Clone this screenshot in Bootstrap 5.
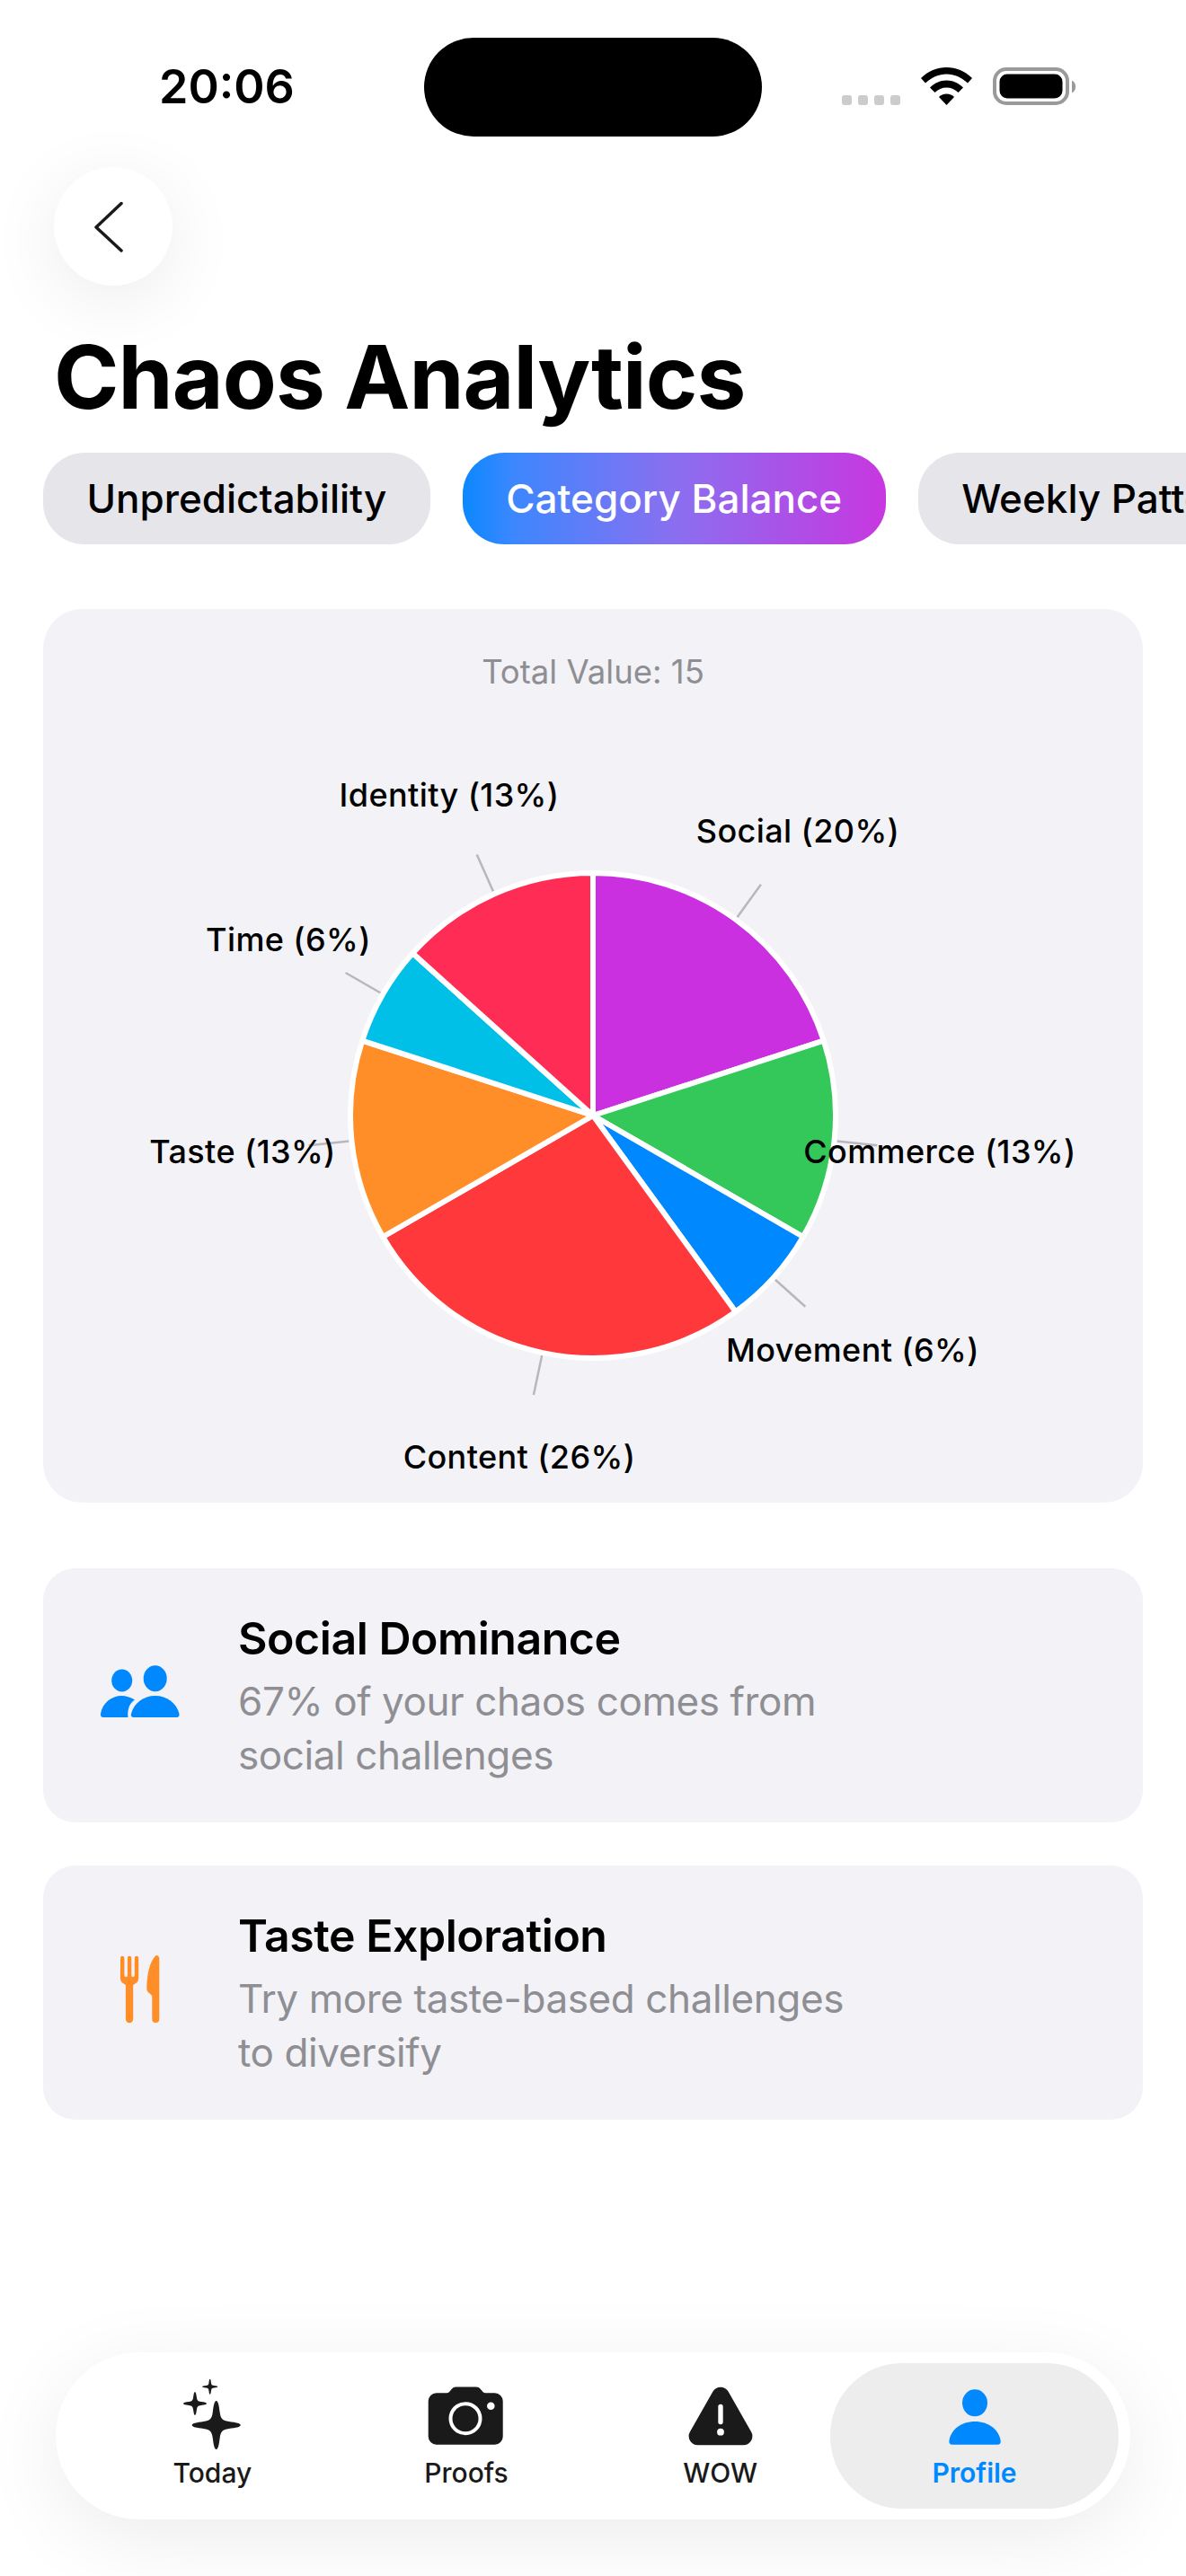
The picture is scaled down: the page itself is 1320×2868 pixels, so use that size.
<!DOCTYPE html>
<html lang="en">
<head>
  <meta charset="UTF-8" />
  <title>Chaos Analytics</title>
  <link rel="stylesheet" href="https://cdn.jsdelivr.net/npm/bootstrap@5.3.0/dist/css/bootstrap.min.css">
  <style>
    body { font-family: Inter, "Liberation Sans", sans-serif; color: #000; background: #fff; }
    .screen { width: 1320px; height: 2868px; overflow: hidden; }

    .status-row { padding: 42px 0 0 177px; height: 152px; }
    .status-time { width: 295px; margin-top: 25px; font-size: 52px; line-height: 60px; font-weight: 600; }
    .island { width: 376px; height: 110px; border-radius: 55px; background: #000; }
    .status-icons { margin: 33px 0 0 89px; height: 42px; }
    .sig-dot { width: 11px; height: 11px; border-radius: 3px; background: #ccc; }
    .sig-dots { gap: 7px; }
    .wifi-icon, .batt-icon { margin-left: 23px; }

    .back-btn { width: 132px; height: 132px; margin: 34px 0 0 60px; background: #fff; box-shadow: 0 16px 80px rgba(0, 0, 0, .08); }

    .page-title { margin: 47px 0 0 60px; font-size: 98px; line-height: 110px; font-weight: 700; letter-spacing: -.9px; }

    .seg-row { margin-top: 29px; padding-left: 48px; gap: 36px; overflow: hidden; }
    .seg-pill { flex: 0 0 auto; height: 102px; padding: 0 48.500px; border-radius: 46px; background: #e5e5ea; font-size: 44px; line-height: 102px; font-weight: 500; white-space: nowrap; }
    .seg-pill.is-on { background: linear-gradient(90deg, #0a88ff 0%, #3d87fe 12%, #8a6ff0 50%, #c837e0 100%); color: #fff; }

    .panel { margin: 0 48px; background: #f2f2f7; border: 0; }
    .chart-panel { margin-top: 72px; height: 995px; border-radius: 44px; }
    .chart-total { padding-top: 50px; font-size: 36.500px; line-height: 40px; color: #8e8e93; text-align: center; }
    .chart-svg { display: block; width: 1224px; height: 905px; }
    .chart-svg text { font-size: 36px; font-weight: 550; letter-spacing: .4px; text-anchor: middle; fill: #000; }

    .insight { height: 283px; border-radius: 36px; }
    .insight-first { margin-top: 73px; }
    .insight-next { margin-top: 48px; }
    .insight-icon { width: 110px; margin: 0 55px 0 52px; }
    .insight-copy { padding-top: 3px; }
    .insight-title { font-size: 50px; line-height: 60px; font-weight: 600; letter-spacing: -.45px; }
    .insight-text { margin-top: 10px; font-size: 44px; line-height: 60px; letter-spacing: -.4px; color: #8e8e93; }

    .tabbar { margin: auto 62px 63px; height: 186px; padding: 12px 32px 12px 33px; border-radius: 93px; background: #fff; box-shadow: 0 20px 90px rgba(0, 0, 0, .08); }
    .tab-cell { flex: 1 1 0; min-width: 0; height: 162px; padding-top: 9px; color: #1a1a1a; font-size: 30px; line-height: 36px; font-weight: 500; }
    .tab-cell.is-on { flex: 0 0 321px; margin: 0 -19px; border-radius: 80px; background: #ededed; color: #0088ff; font-weight: 600; }
    .tab-cell svg { display: block; height: 95px; }
  </style>
</head>
<body>
  <div class="screen d-flex flex-column">

    <div class="status-row d-flex align-items-start">
      <div class="status-time">20:06</div>
      <div class="island"></div>
      <div class="status-icons d-flex align-items-end">
        <div class="sig-dots d-flex">
          <span class="sig-dot"></span><span class="sig-dot"></span><span class="sig-dot"></span><span class="sig-dot"></span>
        </div>
        <svg class="wifi-icon" width="57" height="42" viewBox="0 0 57 42">
          <path d="M0 12C8 4 18 0 28.500 0C39 0 49 4 57 12L52 17.500C45 11 37 7.500 28.500 7.500C20 7.500 12 11 5 17.500Z"/>
          <path d="M10 22.500C15 17.500 21 14.500 28.500 14.500C36 14.500 42 17.500 47 22.500L41.500 28C38 24.500 33.500 22.500 28.500 22.500C23.500 22.500 19 24.500 15.500 28Z"/>
          <path d="M20 33C22 31 25 29.500 28.500 29.500C32 29.500 35 31 37 33L28.500 42Z"/>
        </svg>
        <svg class="batt-icon" width="93" height="42" viewBox="0 0 93 42">
          <rect x="2" y="2" width="81" height="38" rx="13" fill="none" stroke="#9a9a9a" stroke-width="4"/>
          <rect x="7.500" y="7.500" width="70" height="27" rx="8.500"/>
          <path d="M88 14.500a8 8 0 0 1 0 14Z" fill="#9a9a9a"/>
        </svg>
      </div>
    </div>

    <a class="back-btn rounded-circle d-block flex-shrink-0" href="#">
      <svg width="132" height="132" viewBox="0 0 132 132" fill="none" stroke="#1a1a1a" stroke-width="3.500" stroke-linecap="round" stroke-linejoin="round">
        <path d="M75 40.500L47 67L75 93"/>
      </svg>
    </a>

    <h1 class="page-title">Chaos Analytics</h1>

    <div class="seg-row d-flex">
      <div class="seg-pill">Unpredictability</div>
      <div class="seg-pill is-on">Category Balance</div>
      <div class="seg-pill">Weekly Patterns</div>
    </div>

    <div class="card panel chart-panel">
      <div class="chart-total">Total Value: 15</div>
      <svg class="chart-svg" viewBox="48 768 1224 905">
        <g stroke="#b8b8bc" stroke-width="2.500">
          <path d="M820.500 1021.200L846.900 984.700"/>
          <path d="M931.500 1270.500L976.300 1275.200"/>
          <path d="M862.900 1424.700L896.300 1454.800"/>
          <path d="M603.200 1509L593.900 1553"/>
          <path d="M388.500 1270.500L343.700 1275.200"/>
          <path d="M423.600 1105.500L384.600 1083"/>
          <path d="M549 992.600L530.700 951.500"/>
        </g>
        <g stroke="#fff" stroke-width="6" stroke-linejoin="round">
          <path fill="#cb30e0" d="M660 1242L660 972A270 270 0 0 1 916.790 1158.570Z"/>
          <path fill="#34c759" d="M660 1242L916.790 1158.570A270 270 0 0 1 893.830 1377Z"/>
          <path fill="#0088ff" d="M660 1242L893.830 1377A270 270 0 0 1 818.700 1460.440Z"/>
          <path fill="#ff383c" d="M660 1242L818.700 1460.440A270 270 0 0 1 426.170 1377Z"/>
          <path fill="#ff8d28" d="M660 1242L426.170 1377A270 270 0 0 1 403.210 1158.570Z"/>
          <path fill="#00c0e8" d="M660 1242L403.210 1158.570A270 270 0 0 1 459.350 1061.330Z"/>
          <path fill="#ff2d55" d="M660 1242L459.350 1061.330A270 270 0 0 1 660 972Z"/>
        </g>
        <text x="500" y="898">Identity (13%)</text>
        <text x="888" y="938">Social (20%)</text>
        <text x="321" y="1059">Time (6%)</text>
        <text x="270" y="1295">Taste (13%)</text>
        <text x="1046" y="1295">Commerce (13%)</text>
        <text x="949" y="1516">Movement (6%)</text>
        <text x="578" y="1635">Content (26%)</text>
      </svg>
    </div>

    <div class="card panel insight insight-first flex-row align-items-center">
      <div class="insight-icon d-flex justify-content-center">
        <svg width="110" height="80" viewBox="0 0 110 80" fill="#0088ff">
          <ellipse cx="35.700" cy="23" rx="11.500" ry="12.500"/>
          <ellipse cx="72.700" cy="20.700" rx="13" ry="14.500"/>
          <path d="M15 64Q11.500 64 12 60C14 48 24 40 35.500 40C40 40 45 41.500 50 44.500C44 48 41.500 56 42.500 64Z"/>
          <path d="M49 64Q45 64 46 60C49 48 60 40 72.700 40C85.500 40 96.500 48 99.500 60Q100 64 96.500 64Z"/>
        </svg>
      </div>
      <div class="insight-copy">
        <div class="insight-title">Social Dominance</div>
        <div class="insight-text">67% of your chaos comes from<br>social challenges</div>
      </div>
    </div>

    <div class="card panel insight insight-next flex-row align-items-center">
      <div class="insight-icon d-flex justify-content-center">
        <svg width="70" height="95" viewBox="0 0 70 95" fill="#ff8d28">
          <path d="M14 9a2.200 2.200 0 0 1 4.400 0V28q0 2 1.800 2h.4q1.300 0 1.300-2V9a2.200 2.200 0 0 1 4.400 0V28q0 2 1.300 2h.4q1.800 0 1.800-2V9a2.200 2.200 0 0 1 4.400 0V31q0 4-3 6l-3 2V77a4.150 4.150 0 0 1-8.300 0V39l-3-2q-3-2-3-6Z"/>
          <path d="M53.500 6a3.800 3.800 0 0 1 3.800 3.800V77a4 4 0 0 1-8 0V52q0-1.500-1.500-2.500l-3-2.500q-1.500-1.500-1.500-4C43.500 28 46 14 53.500 6Z"/>
        </svg>
      </div>
      <div class="insight-copy">
        <div class="insight-title">Taste Exploration</div>
        <div class="insight-text">Try more taste-based challenges<br>to diversify</div>
      </div>
    </div>

    <nav class="tabbar d-flex">
      <div class="tab-cell d-flex flex-column align-items-center">
        <svg width="95" viewBox="0 0 95 95" fill="#1a1a1a">
          <defs>
            <path id="star4" d="M0-27C2-27 3-22 4-14C5-7 7-5 14-4C22-3 27-2 27 0C27 2 22 3 14 4C7 5 5 7 4 14C3 22 2 27 0 27C-2 27-3 22-4 14C-5 7-7 5-14 4C-22 3-27 2-27 0C-27-2-22-3-14-4C-7-5-5-7-4-14C-3-22-2-27 0-27Z"/>
          </defs>
          <use href="#star4" transform="translate(51.700 60)"/>
          <use href="#star4" transform="translate(28 36) scale(.48)"/>
          <use href="#star4" transform="translate(44.700 17.300) scale(.315)"/>
        </svg>
        <span>Today</span>
      </div>
      <div class="tab-cell d-flex flex-column align-items-center">
        <svg width="110" viewBox="0 -5 110 95">
          <path fill="#1a1a1a" d="M21.700 19.300H33q2 0 3.300-1.500l2.500-3q1.700-2.300 4.700-2.300H66q3 0 4.700 2.300l2.500 3q1.300 1.500 3.300 1.500H86.700a9 9 0 0 1 9 9V67.700a9 9 0 0 1-9 9H21.700a9 9 0 0 1-9-9V28.300a9 9 0 0 1 9-9Z"/>
          <circle cx="54" cy="47.700" r="16.500" fill="none" stroke="#fff" stroke-width="4"/>
          <circle cx="82.300" cy="33.700" r="4.300" fill="#fff"/>
        </svg>
        <span>Proofs</span>
      </div>
      <div class="tab-cell d-flex flex-column align-items-center">
        <svg width="100" viewBox="0 -5 100 95">
          <path fill="#1a1a1a" d="M41.500 17.500a10 10 0 0 1 17 0L83.800 62a10 10 0 0 1-8.500 15.300H24.700a10 10 0 0 1-8.500-15.300Z"/>
          <rect x="47.300" y="31.700" width="5.400" height="22.600" rx="2.700" fill="#fff"/>
          <circle cx="50" cy="62.700" r="3.900" fill="#fff"/>
        </svg>
        <span>WOW</span>
      </div>
      <div class="tab-cell is-on d-flex flex-column align-items-center">
        <svg width="85" viewBox="0 -10 85 95" fill="#0088ff">
          <ellipse cx="43" cy="25.300" rx="14" ry="15"/>
          <path d="M18 71.700q-4 0-3.600-4C16 55 28 46 43 46C58 46 70 55 71.700 67.700q.4 4-3.600 4Z"/>
        </svg>
        <span>Profile</span>
      </div>
    </nav>

  </div>
  <script src="https://cdn.jsdelivr.net/npm/bootstrap@5.3.0/dist/js/bootstrap.bundle.min.js"></script>
</body>
</html>
